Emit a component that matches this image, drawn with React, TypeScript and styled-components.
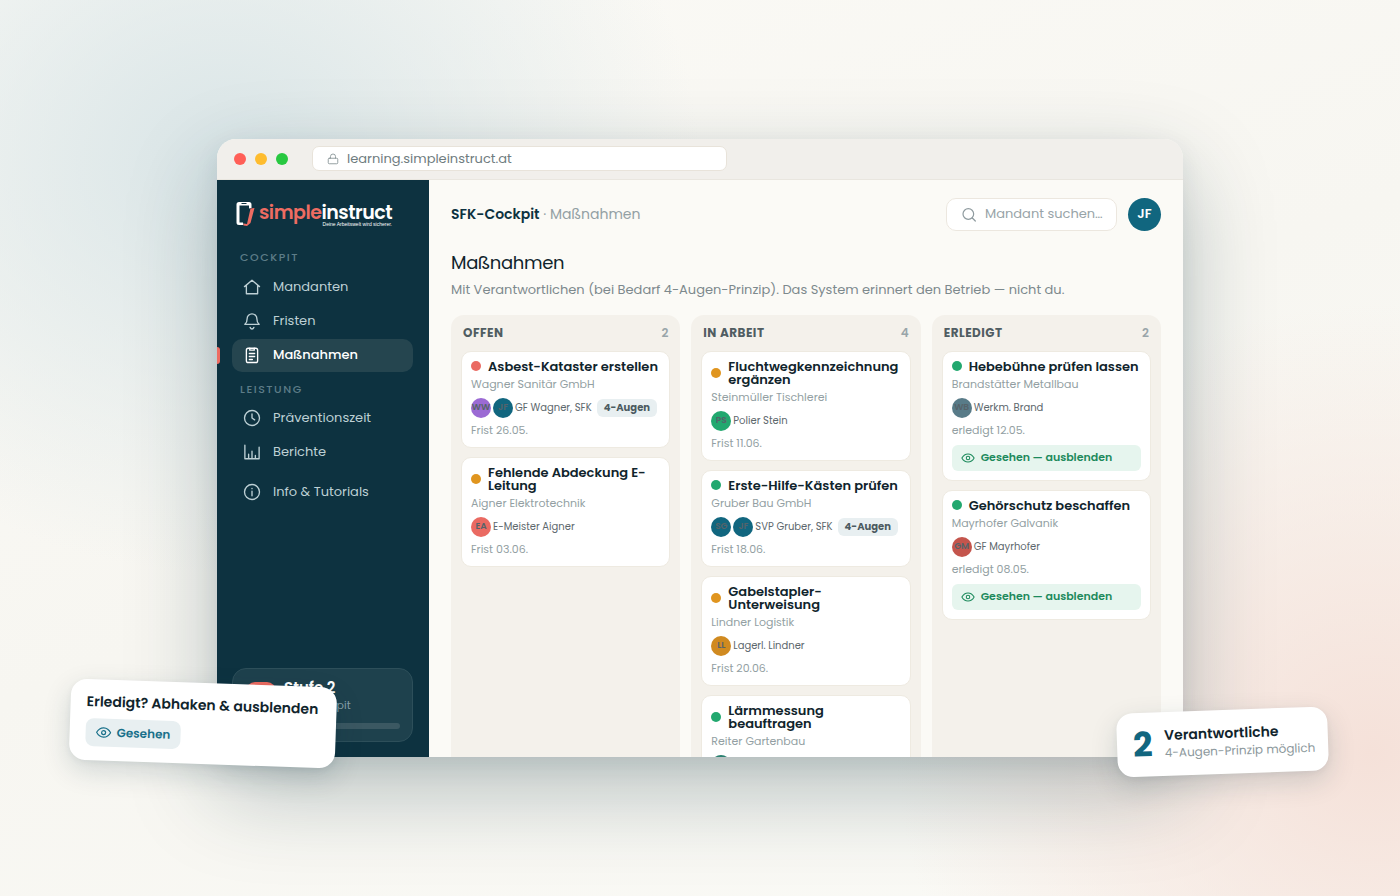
import React from 'react';
import styled, { createGlobalStyle } from 'styled-components';

const GlobalStyle = createGlobalStyle`
  *, *::before, *::after { box-sizing: border-box; }
  body { margin: 0; }
  body, button, input {
    font-family: Poppins, Inter, 'Noto Sans', sans-serif;
  }
  h1, h2, h3, p, ul { margin: 0; padding: 0; }
  ul { list-style: none; }
`;

const Stage = styled.div`
  min-height: 100vh;
  display: flex;
  align-items: center;
  justify-content: center;
  overflow: hidden;
  background:
    radial-gradient(ellipse 34% 46% at 16% 18%, #d9e5e7 0%, rgba(217, 229, 231, 0) 100%),
    radial-gradient(ellipse 34% 50% at 98% 84%, #f5e1d9 0%, rgba(245, 225, 217, 0) 100%),
    linear-gradient(160deg, #fbfaf6 0%, #f7f6f1 50%, #fafaf6 100%);
`;

const Scene = styled.div`
  position: relative;
  width: 69%;
`;

const Browser = styled.div`
  height: 69vh;
  display: flex;
  flex-direction: column;
  overflow: hidden;
  border-radius: 19px 19px 0 0;
  background: #fbfaf6;
  box-shadow: 0 34px 90px rgba(13, 50, 62, 0.28), 0 8px 24px rgba(13, 50, 62, 0.08);
`;

const Chrome = styled.div`
  flex: none;
  display: flex;
  align-items: center;
  gap: 24px;
  height: 41px;
  padding: 0 17px;
  background: #f1efeb;
  border-bottom: 1px solid #e9e6df;
`;

const Lights = styled.div`
  display: flex;
  gap: 9px;
`;

const Light = styled.span<{ $color: string }>`
  width: 12px;
  height: 12px;
  border-radius: 50%;
  background: ${(p) => p.$color};
`;

const Address = styled.label`
  display: flex;
  align-items: center;
  gap: 8px;
  flex: 0 1 415px;
  height: 25px;
  padding: 0 14px;
  color: #8a9699;
  background: #fff;
  border: 1px solid #e8e3da;
  border-radius: 7px;
`;

const AddressInput = styled.input`
  flex: 1;
  min-width: 0;
  padding: 0;
  border: 0;
  outline: 0;
  background: none;
  color: #6f7c80;
  font-size: 13px;
`;

const Body = styled.div`
  flex: 1;
  min-height: 0;
  display: flex;
`;

const Sidebar = styled.aside`
  flex: none;
  display: flex;
  flex-direction: column;
  width: 212px;
  padding: 21px 16px 15px 15px;
  background: #0d3240;
`;

const LogoLink = styled.a`
  display: block;
  height: 30px;
  margin-left: 4px;
  svg { display: block; overflow: visible; }
`;

const SectionLabel = styled.h3`
  padding: 0 8px;
  margin: 18px 0 6px;
  color: #5d7d88;
  font-size: 11px;
  line-height: 16px;
  font-weight: 500;
  letter-spacing: 0.14em;
  text-transform: uppercase;
  ul + & { margin: 9px 0 5px; }
`;

const NavList = styled.ul`
  display: flex;
  flex-direction: column;
  gap: 1px;
  & + & { margin-top: 7px; }
`;

const NavLink = styled.a<{ $active?: boolean }>`
  position: relative;
  display: flex;
  align-items: center;
  gap: 12px;
  height: 33px;
  padding: 0 11px;
  border-radius: 10px;
  color: ${(p) => (p.$active ? '#fff' : '#bdd0d5')};
  background: ${(p) => (p.$active ? '#25454f' : 'transparent')};
  font-size: 13px;
  font-weight: ${(p) => (p.$active ? 500 : 400)};
  text-decoration: none;
  &::before {
    content: '';
    display: ${(p) => (p.$active ? 'block' : 'none')};
    position: absolute;
    left: -15px;
    top: 8px;
    width: 3px;
    height: 17px;
    border-radius: 0 3px 3px 0;
    background: #ee6c62;
  }
`;

const LevelCard = styled.div`
  display: grid;
  grid-template-columns: 30px 1fr;
  column-gap: 8px;
  row-gap: 11px;
  margin-top: auto;
  padding: 9px 12px 12px 13px;
  border: 1px solid #2d4f5a;
  border-radius: 14px;
  background: #1e414d;
`;

const LevelMark = styled.span`
  align-self: center;
  height: 26px;
  border-radius: 9px;
  background: #ee6c62;
`;

const LevelTitle = styled.strong`
  display: block;
  color: #fff;
  font-size: 15px;
  line-height: 20px;
  font-weight: 600;
`;

const LevelText = styled.span`
  display: block;
  color: #86a0a8;
  font-size: 11px;
  line-height: 14px;
`;

const LevelTrack = styled.div`
  grid-column: 1 / -1;
  height: 6px;
  border-radius: 3px;
  background: #3b5862;
`;

const Main = styled.main`
  flex: 1;
  min-width: 0;
  display: flex;
  flex-direction: column;
  padding: 18px 22px 0;
`;

const TopBar = styled.header`
  flex: none;
  display: flex;
  align-items: center;
  gap: 11px;
`;

const Crumb = styled.div`
  flex: 1;
  color: #93a0a4;
  font-size: 14px;
  strong { color: #0d3240; font-weight: 600; }
`;

const Search = styled.label`
  display: flex;
  align-items: center;
  gap: 8px;
  width: 171px;
  height: 33px;
  padding: 0 11px 0 14px;
  color: #8f9b9f;
  background: #fff;
  border: 1px solid #ece7df;
  border-radius: 10px;
`;

const SearchInput = styled.input`
  flex: 1;
  min-width: 0;
  padding: 0;
  border: 0;
  outline: 0;
  background: none;
  font-size: 13px;
  &::placeholder { color: #98a4a8; opacity: 1; }
`;

const UserButton = styled.button`
  width: 33px;
  height: 33px;
  padding: 0;
  border: 0;
  border-radius: 50%;
  background: #11667f;
  color: #fff;
  font-size: 13px;
  font-weight: 600;
`;

const Title = styled.h1`
  margin-top: 19px;
  color: #10242c;
  font-size: 18px;
  line-height: 26px;
  font-weight: 400;
  letter-spacing: -0.02em;
`;

const Lead = styled.p`
  margin: 4px 0 15px;
  color: #7d898d;
  font-size: 13px;
  line-height: 20px;
  white-space: nowrap;
`;

const Board = styled.div`
  flex: 1;
  min-height: 0;
  display: grid;
  grid-template-columns: repeat(3, minmax(0, 1fr));
  gap: 11px;
`;

const Column = styled.section`
  padding: 10px 10px 0;
  border-radius: 13px 13px 0 0;
  background: #f4f1eb;
`;

const ColumnHead = styled.div`
  display: flex;
  justify-content: space-between;
  padding: 0 2px;
  margin-bottom: 11px;
  color: #99a5a9;
  font-size: 12px;
  line-height: 15px;
  font-weight: 600;
`;

const ColumnTitle = styled.h2`
  color: #505d62;
  font-size: inherit;
  font-weight: 700;
  letter-spacing: 0.04em;
  text-transform: uppercase;
`;

const Cards = styled.div`
  display: flex;
  flex-direction: column;
  gap: 9px;
`;

const Card = styled.article`
  padding: 8px 9px 9px;
  border: 1px solid #eeeae1;
  border-radius: 10px;
  background: #fff;
`;

const CardTitle = styled.h3`
  display: flex;
  align-items: center;
  gap: 7px;
  color: #10242c;
  font-size: 13px;
  line-height: 13px;
  font-weight: 600;
`;

const Dot = styled.span<{ $color: string }>`
  flex: none;
  width: 10px;
  height: 10px;
  border-radius: 50%;
  background: ${(p) => p.$color};
`;

const Muted = styled.p`
  color: #939fa3;
  font-size: 11px;
  line-height: 16px;
`;

const Company = styled(Muted)`
  margin: 3px 0 6px;
`;

const Due = styled(Muted)`
  margin-top: 4px;
`;

const People = styled.div`
  display: flex;
  align-items: center;
  gap: 2px;
  height: 20px;
  color: #5d686d;
  font-size: 10px;
  white-space: nowrap;
`;

const Avatar = styled.span<{ $color: string }>`
  flex: none;
  display: grid;
  place-items: center;
  width: 20px;
  height: 20px;
  border-radius: 50%;
  background: ${(p) => p.$color};
  color: #56636a;
  font-size: 9px;
  font-weight: 600;
`;

const Badge = styled.span`
  margin-left: 3px;
  padding: 0 7px;
  border-radius: 6px;
  background: #e8eff1;
  color: #4c5b61;
  font-size: 10px;
  line-height: 18px;
  font-weight: 700;
`;

const SeenButton = styled.button`
  display: flex;
  align-items: center;
  gap: 6px;
  width: 100%;
  height: 26px;
  margin-top: 7px;
  padding: 0 9px;
  border: 0;
  border-radius: 6px;
  background: #e6f5ee;
  color: #1d8a5c;
  font-size: 11px;
  font-weight: 600;
`;

const Float = styled.div`
  position: absolute;
  border-radius: 16px;
  background: #fff;
  box-shadow: 0 10px 28px rgba(13, 50, 62, 0.16), 0 2px 6px rgba(13, 50, 62, 0.06);
`;

const SeenFloat = styled(Float)`
  left: -147px;
  bottom: -7px;
  width: 266px;
  padding: 14px 16px;
  transform: rotate(2deg);
`;

const FloatTitle = styled.strong`
  display: block;
  color: #10242c;
  font-size: 14px;
  line-height: 17px;
  font-weight: 600;
  white-space: nowrap;
`;

const FloatText = styled.span`
  display: block;
  color: #8c989c;
  font-size: 12px;
  line-height: 18px;
  white-space: nowrap;
`;

const FloatButton = styled.button`
  display: flex;
  align-items: center;
  gap: 5px;
  height: 28px;
  margin-top: 8px;
  padding: 0 10px;
  border: 0;
  border-radius: 8px;
  background: #e8eff1;
  color: #19708a;
  font-size: 12px;
  font-weight: 600;
`;

const OwnersFloat = styled(Float)`
  right: -145px;
  bottom: -17px;
  display: flex;
  align-items: center;
  gap: 12px;
  width: 211px;
  height: 64px;
  padding: 0 16px;
  transform: rotate(-2deg);
`;

const BigNumber = styled.span`
  color: #11667f;
  font-size: 34px;
  line-height: 34px;
  font-weight: 700;
`;

const Icon = ({ size = 18, children }: { size?: number; children: React.ReactNode }) => (
  <svg
    width={size}
    height={size}
    viewBox="0 0 24 24"
    fill="none"
    stroke="currentColor"
    strokeWidth={1.8}
    strokeLinecap="round"
    strokeLinejoin="round"
    aria-hidden="true"
    style={{ flex: 'none' }}
  >
    {children}
  </svg>
);

const icons = {
  home: <path d="M2 11.500 12 3l10 8.500M4.500 9.500V21h15V9.500" />,
  bell: (
    <>
      <path d="M2.500 16.500h19c-2-1.500-3-3.500-3-7.500a6.500 6.500 0 0 0-13 0c0 4-1 6-3 7.500Z" />
      <path d="M9.500 20.500c.6 1.500 1.500 2.200 2.500 2.200s1.900-.7 2.500-2.200" />
    </>
  ),
  clipboard: (
    <>
      <rect x="4.500" y="3" width="15" height="19" rx="2.500" />
      <path d="M9 3v2.500h6V3M8.500 10h7M8.500 14h7M8.500 18h4" />
    </>
  ),
  clock: (
    <>
      <circle cx="12" cy="12" r="10" />
      <path d="M12 6.500V12l3.500 2.500" />
    </>
  ),
  chart: <path d="M2.500 3v18h19V5.500M7.500 21v-6M12 21V11M16.500 21v-4.500" />,
  info: (
    <>
      <circle cx="12" cy="12" r="10" />
      <path d="M12 11v6M12 7.300v.2" />
    </>
  ),
  eye: (
    <>
      <path d="M1.500 12C4 7.500 7.500 5 12 5s8 2.500 10.500 7c-2.500 4.500-6 7-10.500 7S4 16.500 1.500 12Z" />
      <circle cx="12" cy="12" r="3" />
    </>
  ),
  lock: (
    <>
      <rect x="2.500" y="10.500" width="19" height="11" rx="2" />
      <path d="M7 10.500V7a5 5 0 0 1 10 0v3.500" />
    </>
  ),
  search: (
    <>
      <circle cx="11" cy="12" r="8" />
      <path d="m17 18 4.500 4.500" />
    </>
  ),
};

const Logo = () => (
  <svg width="158" height="30" viewBox="0 0 158 30" role="img" aria-label="simpleinstruct">
    <path
      d="M3 1h10a2.500 2.500 0 0 1 2.500 2.500V7L13 7.500V4.500H3.500v17H7l.5 2.500H3A2.500 2.500 0 0 1 .5 21.500v-18A2.500 2.500 0 0 1 3 1Z"
      fill="#fff"
    />
    <path d="M5.500 2.500h5" stroke="#0d3240" strokeWidth="1" />
    <path d="m14.500 7.500 4-.5-4 15-3.500 3-3.500-.5v-2l3.500.500Z" fill="#ee6c62" />
    <text x="23" y="18" fontSize="19" fontWeight="600" letterSpacing="-0.5" fill="#ee6c62">
      simple<tspan fill="#fff">instruct</tspan>
    </text>
    <text x="156" y="25" textAnchor="end" fontFamily="Liberation Sans, sans-serif" fontSize="5" fill="#fff">
      Deine Arbeitswelt wird sicherer.
    </text>
  </svg>
);

const RED = '#ea6a62';
const AMBER = '#e0951f';
const GREEN = '#22a86f';
const TEAL = '#11667f';

type Task = {
  title: string;
  dot: string;
  company: string;
  people: [string, string][];
  names?: string;
  due?: string;
  pair?: boolean;
  done?: boolean;
};

const columns: { title: string; count: number; tasks: Task[] }[] = [
  {
    title: 'Offen',
    count: 2,
    tasks: [
      { title: 'Asbest-Kataster erstellen', dot: RED, company: 'Wagner Sanitär GmbH', people: [['WW', '#9b6ad4'], ['JF', TEAL]], names: 'GF Wagner, SFK', due: 'Frist 26.05.', pair: true },
      { title: 'Fehlende Abdeckung E-Leitung', dot: AMBER, company: 'Aigner Elektrotechnik', people: [['EA', RED]], names: 'E-Meister Aigner', due: 'Frist 03.06.' },
    ],
  },
  {
    title: 'In Arbeit',
    count: 4,
    tasks: [
      { title: 'Fluchtwegkennzeichnung ergänzen', dot: AMBER, company: 'Steinmüller Tischlerei', people: [['PS', GREEN]], names: 'Polier Stein', due: 'Frist 11.06.' },
      { title: 'Erste-Hilfe-Kästen prüfen', dot: GREEN, company: 'Gruber Bau GmbH', people: [['SG', TEAL], ['JF', TEAL]], names: 'SVP Gruber, SFK', due: 'Frist 18.06.', pair: true },
      { title: 'Gabelstapler-Unterweisung', dot: AMBER, company: 'Lindner Logistik', people: [['LL', '#d08a20']], names: 'Lagerl. Lindner', due: 'Frist 20.06.' },
      { title: 'Lärmmessung beauftragen', dot: GREEN, company: 'Reiter Gartenbau', people: [['', '#2b8070']] },
    ],
  },
  {
    title: 'Erledigt',
    count: 2,
    tasks: [
      { title: 'Hebebühne prüfen lassen', dot: GREEN, company: 'Brandstätter Metallbau', people: [['WB', '#587b88']], names: 'Werkm. Brand', due: 'erledigt 12.05.', done: true },
      { title: 'Gehörschutz beschaffen', dot: GREEN, company: 'Mayrhofer Galvanik', people: [['GM', '#c4554c']], names: 'GF Mayrhofer', due: 'erledigt 08.05.', done: true },
    ],
  },
];

const TaskCard = ({ task }: { task: Task }) => (
  <Card>
    <CardTitle>
      <Dot $color={task.dot} />
      <span>{task.title}</span>
    </CardTitle>
    <Company>{task.company}</Company>
    <People>
      {task.people.map(([initials, color]) => (
        <Avatar key={initials} $color={color}>{initials}</Avatar>
      ))}
      {task.names && <span>{task.names}</span>}
      {task.pair && <Badge>4-Augen</Badge>}
    </People>
    {task.due && <Due>{task.due}</Due>}
    {task.done && (
      <SeenButton type="button">
        <Icon size={14}>{icons.eye}</Icon>
        Gesehen — ausblenden
      </SeenButton>
    )}
  </Card>
);

const NavItem = ({ icon, label, active }: { icon: React.ReactNode; label: string; active?: boolean }) => (
  <li>
    <NavLink href="#" $active={active}>
      <Icon>{icon}</Icon>
      {label}
    </NavLink>
  </li>
);

export default function App() {
  return (
    <>
      <GlobalStyle />
      <Stage>
        <Scene>
          <Browser>
            <Chrome>
              <Lights>
                <Light $color="#ff5f57" />
                <Light $color="#febc2e" />
                <Light $color="#28c840" />
              </Lights>
              <Address>
                <Icon size={12}>{icons.lock}</Icon>
                <AddressInput type="text" aria-label="Adresse" defaultValue="learning.simpleinstruct.at" />
              </Address>
            </Chrome>
            <Body>
              <Sidebar>
                <LogoLink href="#"><Logo /></LogoLink>
                <SectionLabel>Cockpit</SectionLabel>
                <NavList>
                  <NavItem icon={icons.home} label="Mandanten" />
                  <NavItem icon={icons.bell} label="Fristen" />
                  <NavItem icon={icons.clipboard} label="Maßnahmen" active />
                </NavList>
                <SectionLabel>Leistung</SectionLabel>
                <NavList>
                  <NavItem icon={icons.clock} label="Präventionszeit" />
                  <NavItem icon={icons.chart} label="Berichte" />
                </NavList>
                <NavList>
                  <NavItem icon={icons.info} label="Info & Tutorials" />
                </NavList>
                <LevelCard>
                  <LevelMark />
                  <div>
                    <LevelTitle>Stufe 2</LevelTitle>
                    <LevelText>SFK-Cockpit</LevelText>
                  </div>
                  <LevelTrack />
                </LevelCard>
              </Sidebar>
              <Main>
                <TopBar>
                  <Crumb><strong>SFK-Cockpit</strong> · Maßnahmen</Crumb>
                  <Search>
                    <Icon size={16}>{icons.search}</Icon>
                    <SearchInput type="text" aria-label="Mandant suchen" placeholder="Mandant suchen…" />
                  </Search>
                  <UserButton type="button">JF</UserButton>
                </TopBar>
                <Title>Maßnahmen</Title>
                <Lead>Mit Verantwortlichen (bei Bedarf 4-Augen-Prinzip). Das System erinnert den Betrieb — nicht du.</Lead>
                <Board>
                  {columns.map((column) => (
                    <Column key={column.title}>
                      <ColumnHead>
                        <ColumnTitle>{column.title}</ColumnTitle>
                        <span>{column.count}</span>
                      </ColumnHead>
                      <Cards>
                        {column.tasks.map((task) => (
                          <TaskCard key={task.title} task={task} />
                        ))}
                      </Cards>
                    </Column>
                  ))}
                </Board>
              </Main>
            </Body>
          </Browser>
          <SeenFloat>
            <FloatTitle>Erledigt? Abhaken & ausblenden</FloatTitle>
            <FloatButton type="button">
              <Icon size={16}>{icons.eye}</Icon>
              Gesehen
            </FloatButton>
          </SeenFloat>
          <OwnersFloat>
            <BigNumber>2</BigNumber>
            <div>
              <FloatTitle>Verantwortliche</FloatTitle>
              <FloatText>4-Augen-Prinzip möglich</FloatText>
            </div>
          </OwnersFloat>
        </Scene>
      </Stage>
    </>
  );
}
